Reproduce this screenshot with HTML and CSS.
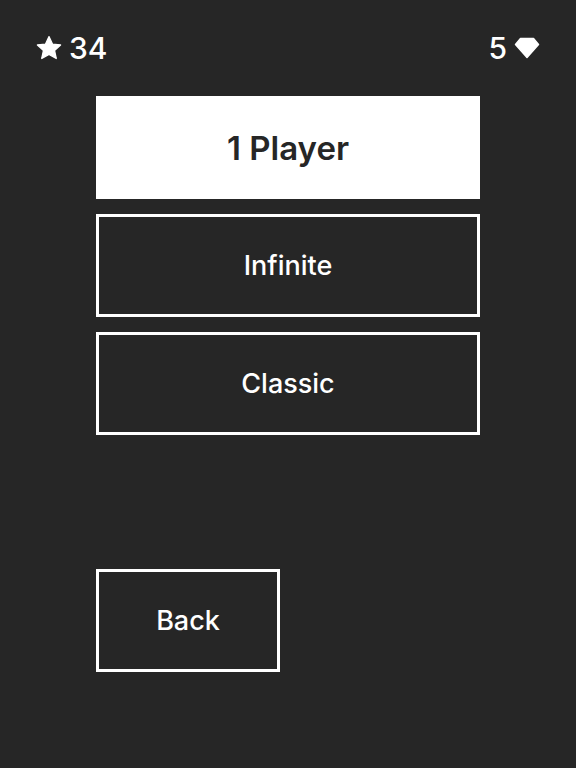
FILE: index.html
```html
<!DOCTYPE html>
<html lang="en">
<head>
    <meta charset="UTF-8">
    <meta name="viewport" content="width=device-width, initial-scale=1.0">
    <title>1 Player</title>
    <link rel="stylesheet" href="styles.css">
</head>
<body>
    <div class="screen">
        <header class="top-bar">
            <div class="stat">
                <svg class="icon" viewBox="0 0 24 24" width="26" height="26">
                    <path d="M12 1.5l3.2 6.9 7.5.8-5.6 5.1 1.6 7.4L12 17.9l-6.7 3.8 1.6-7.4-5.6-5.1 7.5-.8z" fill="#fff" stroke="#fff" stroke-width="1.2" stroke-linejoin="round"/>
                </svg>
                <span>34</span>
            </div>
            <div class="stat">
                <span>5</span>
                <svg class="icon" viewBox="0 0 26 22" width="26" height="22">
                    <path d="M6.5 1.5h13l5 6L13 20.5 1.5 7.5z" fill="#fff" stroke="#fff" stroke-width="1.5" stroke-linejoin="round"/>
                </svg>
            </div>
        </header>

        <div class="menu">
            <div class="title-box">1 Player</div>
            <button class="menu-button">Infinite</button>
            <button class="menu-button">Classic</button>
            <button class="menu-button back-button">Back</button>
        </div>
    </div>
</body>
</html>
```

FILE: styles.css
```css
body {
    margin: 0;
    padding: 0;
    background-color: #262626;
    font-family: Inter, "Noto Sans", sans-serif;
    color: #fff;
}

.screen {
    width: 576px;
    height: 768px;
}

.top-bar {
    height: 96px;
    padding: 0 36px;
    box-sizing: border-box;
    display: flex;
    justify-content: space-between;
    align-items: flex-start;
}

.stat {
    margin-top: 30px;
    display: flex;
    align-items: center;
    gap: 7px;
    font-size: 30px;
    font-weight: 500;
    line-height: 36px;
}

.icon {
    display: block;
}

.menu {
    margin-left: 96px;
    width: 384px;
    display: flex;
    flex-direction: column;
    gap: 15px;
}

.title-box {
    height: 103px;
    background: #fff;
    color: #262626;
    display: flex;
    align-items: center;
    justify-content: center;
    font-size: 33px;
    font-weight: 600;
}

.menu-button {
    height: 103px;
    background: transparent;
    border: 3px solid #fff;
    color: #fff;
    font-family: inherit;
    font-size: 27px;
    font-weight: 500;
    padding: 0;
    cursor: pointer;
}

.back-button {
    width: 184px;
    margin-top: 119px;
}
```
